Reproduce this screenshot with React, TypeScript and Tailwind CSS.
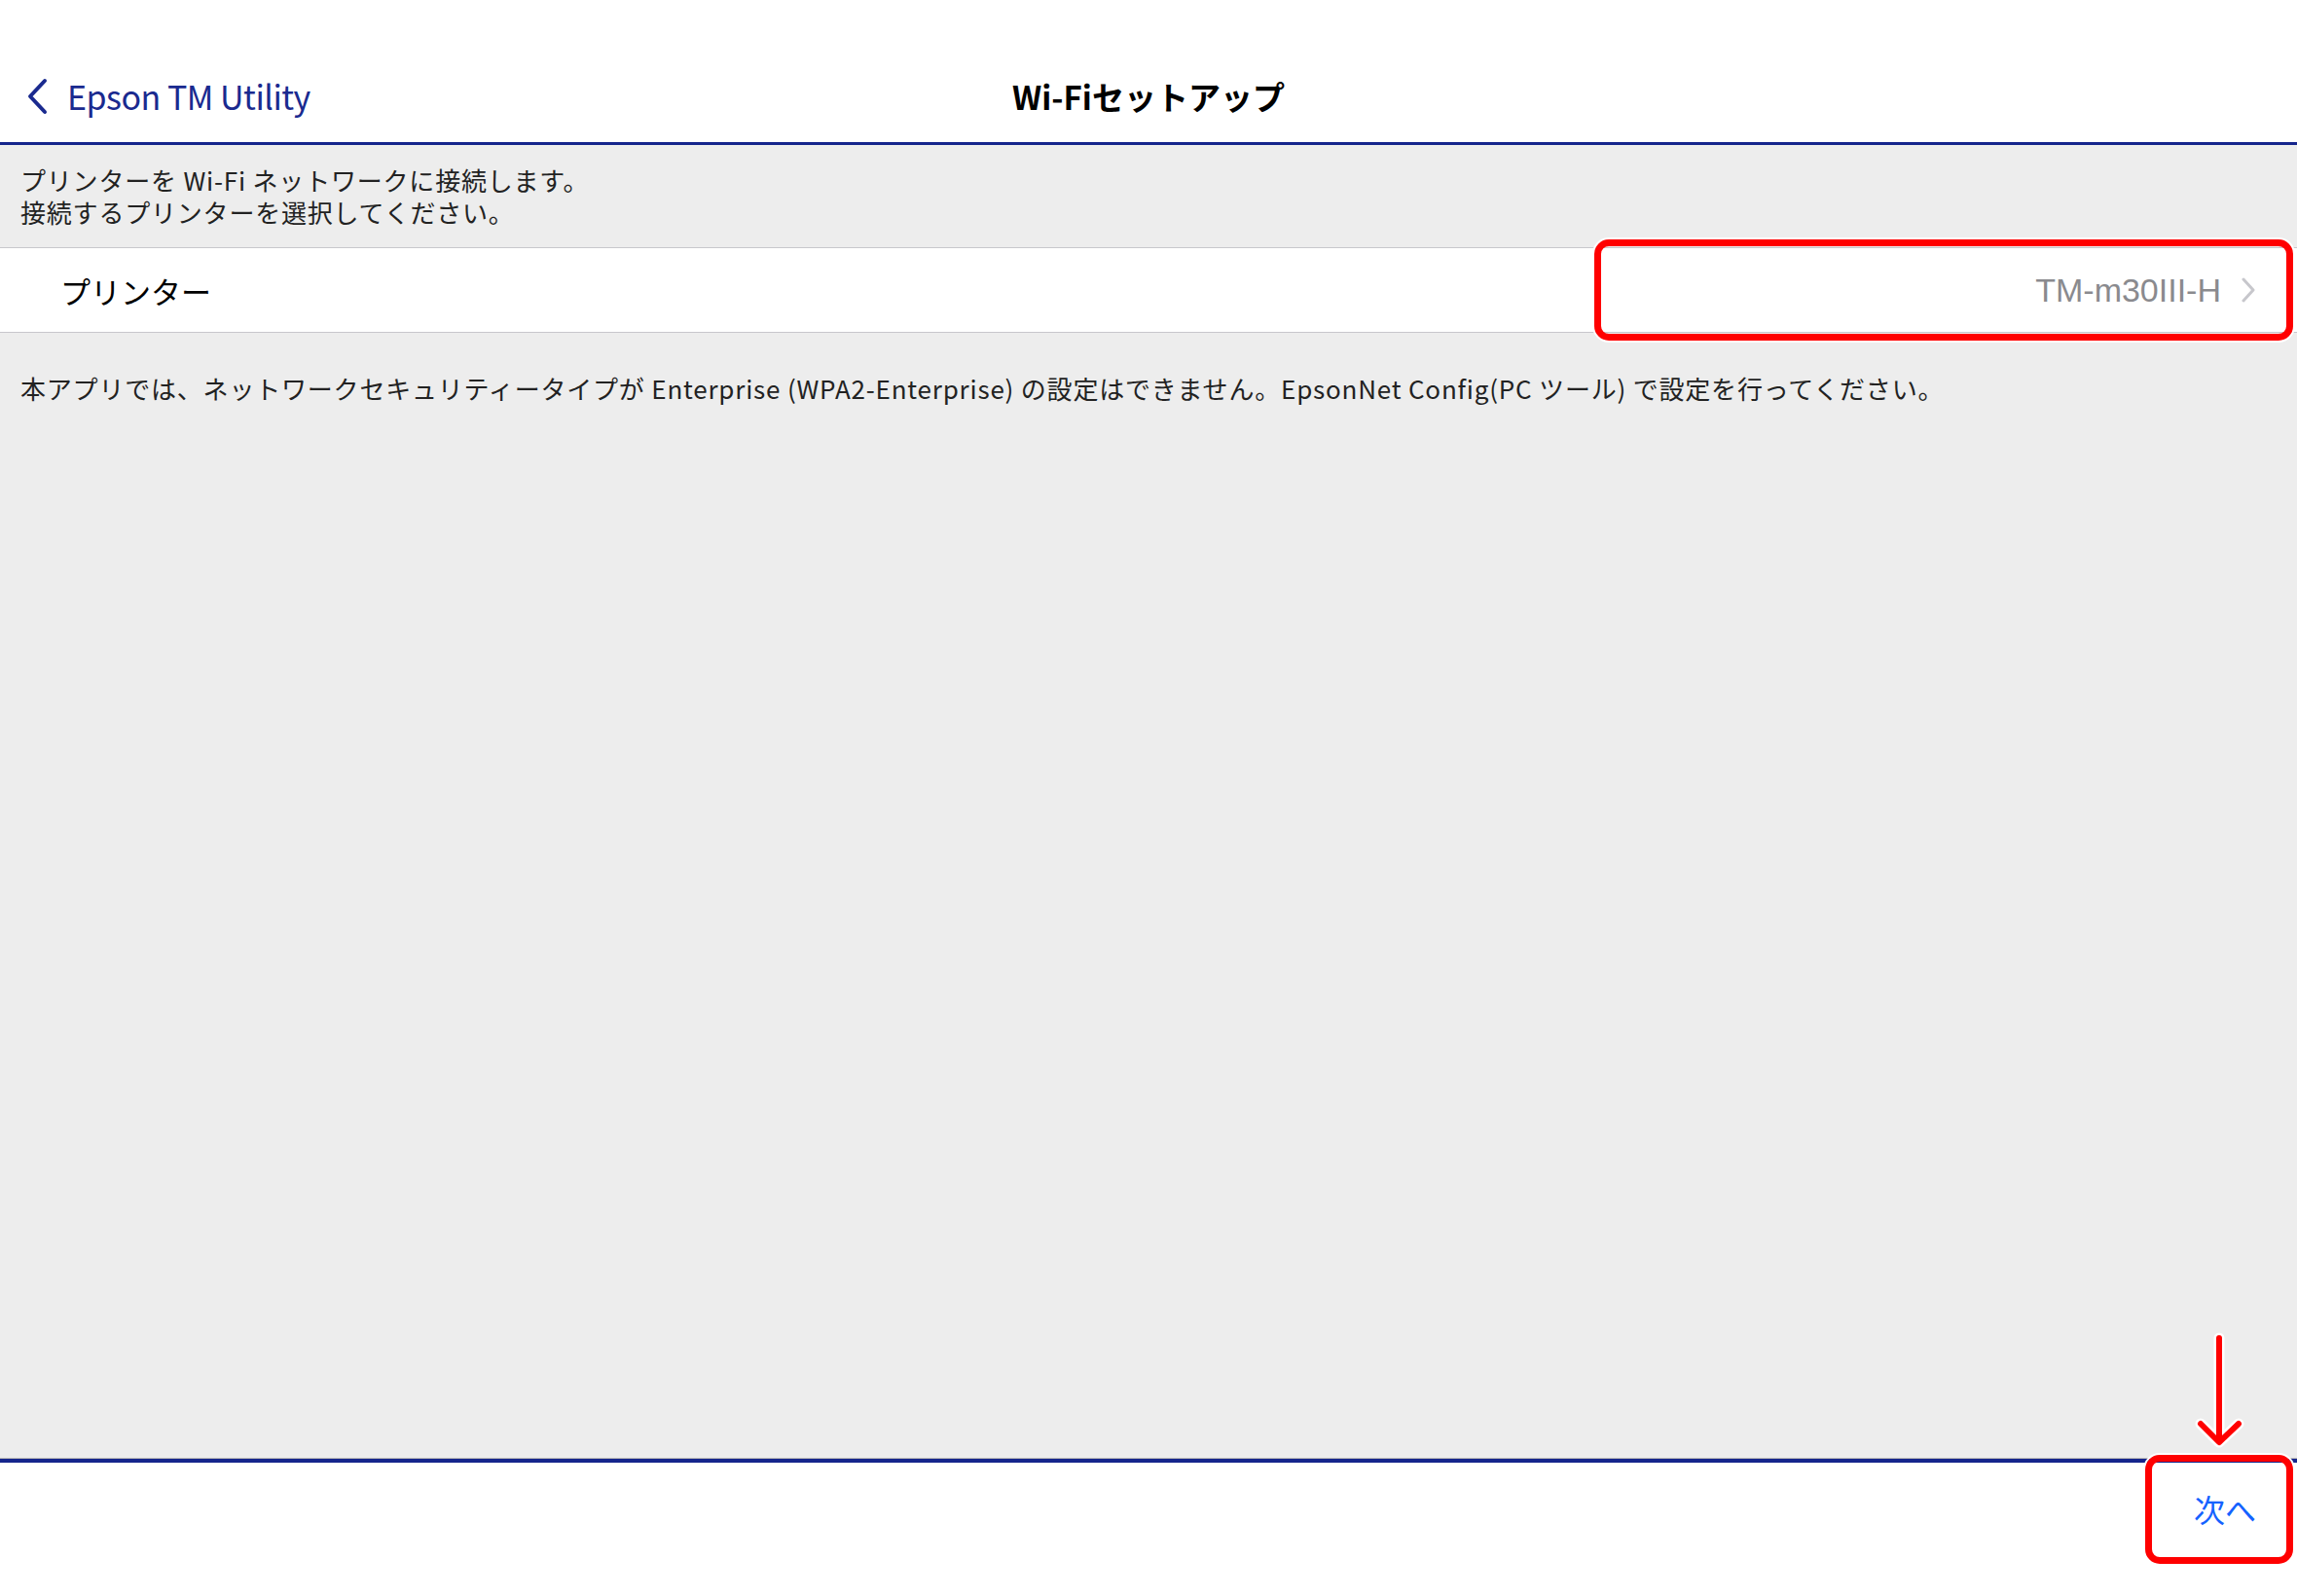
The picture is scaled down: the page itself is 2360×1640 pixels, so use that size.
import { useState } from 'react';

function App() {
  const [printer] = useState("TM-m30III-H");

  return (
    <div className="relative flex flex-col h-screen w-full bg-[#ededed] text-[#1c1c1e] font-['Noto_Sans_CJK_JP','Noto_Sans',sans-serif] overflow-hidden">

      {/* Navigation bar */}
      <header className="h-[149px] shrink-0 bg-white border-b-[3px] border-[#15258c] pt-[52px]">
        <div className="grid grid-cols-[1fr_auto_1fr] items-center h-[94px]">
          <button className="flex items-center gap-[20px] pl-[27px] text-[#1a2a8f] text-[34px] leading-none">
            <svg width="22" height="38" viewBox="0 0 22 38" fill="none">
              <path d="M19 3 L4 19 L19 35" stroke="#1a2a8f" strokeWidth="4" strokeLinecap="round" strokeLinejoin="round" />
            </svg>
            <span className="tracking-[-0.5px]">Epson TM Utility</span>
          </button>
          <h1 className="text-[33px] font-bold leading-none text-black">Wi-Fiセットアップ</h1>
          <div />
        </div>
      </header>

      {/* Intro */}
      <div className="shrink-0 px-[21px] pt-[19px] pb-[20px] text-[26px] leading-[33px] tracking-[0.8px] text-[#222]">
        <p>プリンターを Wi-Fi ネットワークに接続します。</p>
        <p>接続するプリンターを選択してください。</p>
      </div>

      {/* Printer row */}
      <div className="relative shrink-0 bg-white border-y border-[#c8c7cc] h-[88px] flex items-center justify-between pl-[62px] pr-[42px]">
        <span className="text-[31px] leading-none text-black">プリンター</span>
        <div className="flex items-center gap-[20px]">
          <span className="text-[34px] leading-none text-[#8a8a8e] font-['Liberation_Sans','Noto_Sans',sans-serif]">{printer}</span>
          <svg width="16" height="26" viewBox="0 0 16 26" fill="none">
            <path d="M3 2 L13 13 L3 24" stroke="#c7c7cc" strokeWidth="3" strokeLinecap="round" strokeLinejoin="round" />
          </svg>
        </div>
        {/* annotation box */}
        <div className="absolute right-[4px] top-[-9px] w-[718px] h-[104px] rounded-[15px] border-[7px] border-[#ff0000] ring-2 ring-white" />
      </div>

      {/* Notice */}
      <div className="flex-1 px-[21px] pt-[40px] text-[26px] leading-[33px] tracking-[0.8px] text-[#222]">
        <p>本アプリでは、ネットワークセキュリティータイプが Enterprise (WPA2-Enterprise) の設定はできません。EpsonNet Config(PC ツール) で設定を行ってください。</p>
      </div>

      {/* Toolbar */}
      <footer className="relative shrink-0 h-[141px] bg-white border-t-[4px] border-[#15258c] shadow-[0_-1px_0_#b8b8b8]">
        <div className="flex justify-end items-center h-[94px] pr-[42px]">
          <button className="text-[32px] leading-none text-[#1462ff]">次へ</button>
        </div>
        <div className="absolute right-[4px] top-[-8px] w-[152px] h-[112px] rounded-[15px] border-[7px] border-[#ff0000] ring-2 ring-white" />
      </footer>

      {/* annotation arrow */}
      <svg className="absolute left-[2248px] top-[1366px]" width="64" height="126" viewBox="0 0 64 126" fill="none">
        <g stroke="#ffffff" strokeWidth="11" strokeLinecap="round" strokeLinejoin="round">
          <path d="M32 9 L32 114" />
          <path d="M13 97 L32 116 L52 97" />
        </g>
        <g stroke="#ff0000" strokeWidth="6" strokeLinecap="round" strokeLinejoin="round">
          <path d="M32 9 L32 114" />
          <path d="M13 97 L32 116 L52 97" />
        </g>
      </svg>
    </div>
  );
}

export default App;
